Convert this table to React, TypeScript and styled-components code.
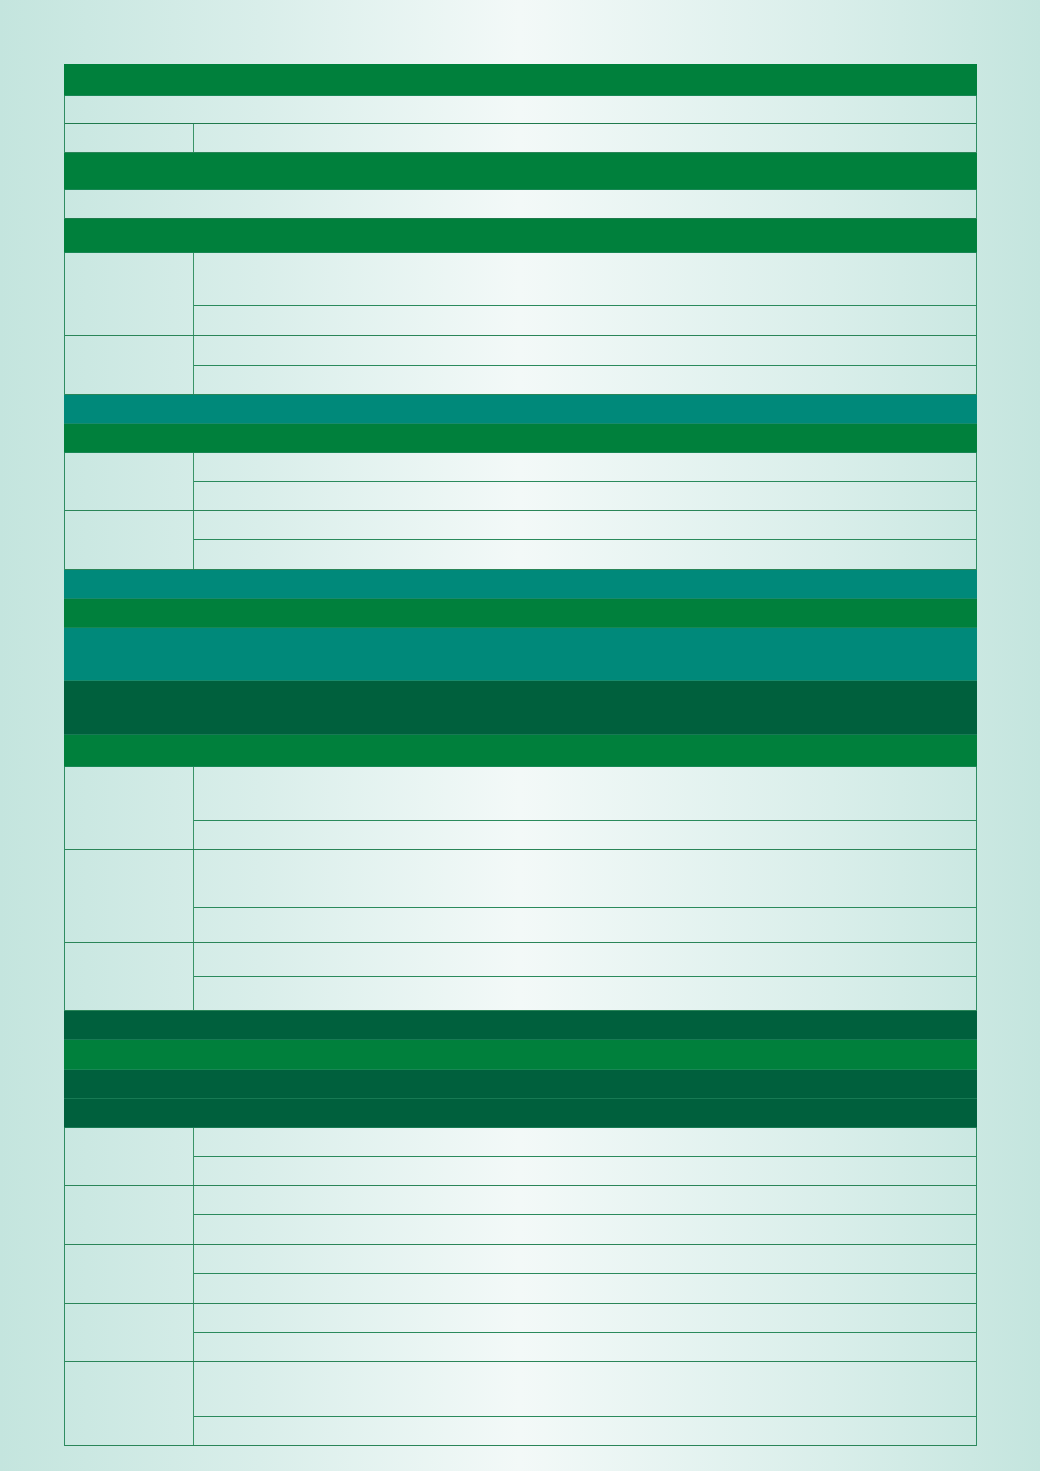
import React from "react";
import styled, { createGlobalStyle } from "styled-components";

const Global = createGlobalStyle`
  html, body { margin: 0; padding: 0; }
  body {
    font-family: "Liberation Sans", Arial, sans-serif;
    background: linear-gradient(90deg, #c4e5de 0%, #d9eeea 25%, #f3f9f8 50%, #d9eeea 80%, #c4e5de 100%);
    min-height: 1471px;
  }
`;

const Page = styled.div`
  width: 1040px;
  height: 1471px;
  padding: 64px 63px 0 64px;
  box-sizing: border-box;
`;

const Table = styled.div`
  display: flex;
  flex-direction: column;
  border-left: 1px solid #2f8c62;
  border-right: 1px solid #2f8c62;
  width: 913px;
  box-sizing: border-box;
`;

type Tone = "green" | "teal" | "dark";
const toneColor: Record<Tone, string> = {
  green: "#00803c",
  teal: "#00897a",
  dark: "#00603d",
};

const Band = styled.div<{ $tone: Tone; $h: number }>`
  height: ${(p) => p.$h}px;
  background: ${(p) => toneColor[p.$tone]};
  margin: 0 -1px;
  border-bottom: 1px solid rgba(40, 140, 100, 0.6);
  box-sizing: border-box;
`;

const FullRow = styled.div<{ $h: number }>`
  height: ${(p) => p.$h}px;
  border-bottom: 1px solid #1f7a4c;
  box-sizing: border-box;
`;

const Group = styled.div`
  display: grid;
  grid-template-columns: 129px 1fr;
  border-bottom: 1px solid #2a8558;
`;

const LeftCell = styled.div`
  border-right: 1px solid #3a9468;
`;

const SubRows = styled.div`
  display: flex;
  flex-direction: column;
`;

const SubRow = styled.div<{ $h: number; $last?: boolean }>`
  height: ${(p) => p.$h}px;
  box-sizing: border-box;
  border-bottom: ${(p) => (p.$last ? "none" : "1px solid #2a8a5c")};
`;

type Item =
  | { kind: "band"; tone: Tone; h: number }
  | { kind: "full"; h: number }
  | { kind: "group"; rows: number[] };

const items: Item[] = [
  { kind: "band", tone: "green", h: 32 },
  { kind: "full", h: 28 },
  { kind: "group", rows: [28] },
  { kind: "band", tone: "green", h: 37 },
  { kind: "full", h: 29 },
  { kind: "band", tone: "green", h: 34 },
  { kind: "group", rows: [53, 29] },
  { kind: "group", rows: [30, 28] },
  { kind: "band", tone: "teal", h: 29 },
  { kind: "band", tone: "green", h: 29 },
  { kind: "group", rows: [29, 28] },
  { kind: "group", rows: [29, 29] },
  { kind: "band", tone: "teal", h: 29 },
  { kind: "band", tone: "green", h: 29 },
  { kind: "band", tone: "teal", h: 53 },
  { kind: "band", tone: "dark", h: 54 },
  { kind: "band", tone: "green", h: 32 },
  { kind: "group", rows: [54, 28] },
  { kind: "group", rows: [58, 34] },
  { kind: "group", rows: [34, 33] },
  { kind: "band", tone: "dark", h: 29 },
  { kind: "band", tone: "green", h: 30 },
  { kind: "band", tone: "dark", h: 29 },
  { kind: "band", tone: "dark", h: 29 },
  { kind: "group", rows: [29, 28] },
  { kind: "group", rows: [29, 29] },
  { kind: "group", rows: [29, 29] },
  { kind: "group", rows: [29, 28] },
  { kind: "group", rows: [55, 28] },
];

export default function App() {
  return (
    <>
      <Global />
      <Page>
        <Table>
          {items.map((it, i) => {
            if (it.kind === "band") return <Band key={i} $tone={it.tone} $h={it.h} />;
            if (it.kind === "full") return <FullRow key={i} $h={it.h} />;
            return (
              <Group key={i}>
                <LeftCell />
                <SubRows>
                  {it.rows.map((h, j) => (
                    <SubRow key={j} $h={h} $last={j === it.rows.length - 1} />
                  ))}
                </SubRows>
              </Group>
            );
          })}
        </Table>
      </Page>
    </>
  );
}
